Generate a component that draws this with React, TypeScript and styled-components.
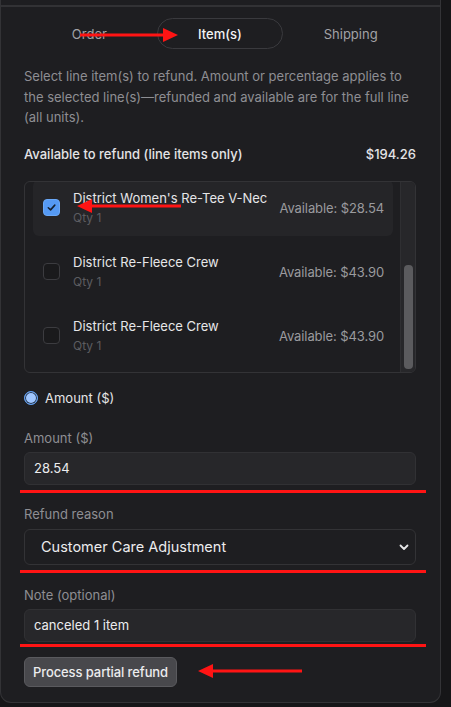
import React from "react";
import styled, { createGlobalStyle } from "styled-components";

const GlobalStyle = createGlobalStyle`
  html, body { margin: 0; padding: 0; background: #161618; }
  body { font-family: Inter, "Noto Sans", sans-serif; -webkit-font-smoothing: antialiased; }
  * { box-sizing: border-box; }
`;

const Page = styled.div`
  position: relative;
  width: 451px;
  height: 707px;
  overflow: hidden;
`;

const Panel = styled.div`
  width: 441px;
  background: #1e1e21;
  border: 1px solid #333336;
  border-top: none;
  border-radius: 0 0 11px 11px;
  padding: 0 24px 15px 23px;
`;

const TopRule = styled.div`
  height: 7px;
  margin: 0 -24px 0 -23px;
  border-bottom: 2px solid #323235;
`;

const Tabs = styled.div`
  display: grid;
  grid-template-columns: repeat(3, 1fr);
  margin-top: 11px;
  height: 31px;
  align-items: stretch;
`;

const Tab = styled.div<{ $active?: boolean }>`
  display: flex;
  align-items: center;
  justify-content: center;
  margin: 0 2px;
  font-size: 13px;
  font-weight: ${(p) => (p.$active ? 500 : 400)};
  color: ${(p) => (p.$active ? "#f2f2f4" : "#a2a2a6")};
  border: 1px solid ${(p) => (p.$active ? "#3a3a3e" : "transparent")};
  border-radius: 999px;
`;

const Description = styled.p`
  margin: 17px 0 0;
  font-size: 13px;
  line-height: 20.5px;
  color: #8e8e93;
`;

const SummaryRow = styled.div`
  margin-top: 16px;
  display: flex;
  justify-content: space-between;
  font-size: 13px;
  line-height: 20px;
  font-weight: 500;
  color: #e4e4e6;
`;

const ListBox = styled.div`
  margin-top: 17px;
  height: 192px;
  border: 1px solid #333336;
  border-radius: 6px;
  display: flex;
  overflow: hidden;
`;

const ListViewport = styled.div`
  flex: 1;
  display: flex;
  flex-direction: column;
  justify-content: flex-end;
  gap: 8px;
  padding: 0 7px 8px 8px;
  overflow: hidden;
  min-width: 0;
`;

const Row = styled.div<{ $selected?: boolean }>`
  flex: 0 0 56px;
  display: flex;
  align-items: center;
  padding: 0 9px 0 10px;
  border-radius: 6px;
  background: ${(p) => (p.$selected ? "#252528" : "transparent")};
`;

const Check = styled.div<{ $checked?: boolean }>`
  width: 17px;
  height: 17px;
  flex: 0 0 17px;
  border-radius: 4px;
  display: flex;
  align-items: center;
  justify-content: center;
  background: ${(p) => (p.$checked ? "#559af4" : "#1a1a1c")};
  border: 1px solid ${(p) => (p.$checked ? "#6aa8f7" : "#3c3c40")};
`;

const ItemText = styled.div`
  margin-left: 13px;
  width: 194px;
  overflow: hidden;
  display: flex;
  flex-direction: column;
  gap: 2px;
`;

const ItemName = styled.div`
  font-size: 13px;
  line-height: 18px;
  color: #e6e6e8;
  white-space: nowrap;
  overflow: hidden;
`;

const ItemQty = styled.div`
  font-size: 12px;
  line-height: 18px;
  color: #5c5c60;
`;

const ItemAvail = styled.div`
  margin-left: auto;
  font-size: 13px;
  letter-spacing: -0.1px;
  color: #9a9a9e;
  white-space: nowrap;
`;

const ScrollTrack = styled.div`
  flex: 0 0 15px;
  background: #27272a;
  border-left: 1px solid #2f2f32;
  display: flex;
  flex-direction: column;
  justify-content: flex-end;
  padding: 0 2px 3px 3px;
`;

const ScrollThumb = styled.div`
  height: 104px;
  border-radius: 4px;
  background: #5b5b5e;
`;

const RadioRow = styled.label`
  margin-top: 15px;
  display: flex;
  align-items: center;
  gap: 7px;
  font-size: 13px;
  line-height: 20px;
  color: #e4e4e6;
`;

const RadioDot = styled.span`
  width: 14px;
  height: 14px;
  border-radius: 50%;
  background: #9fc6ff;
  border: 1.5px solid #5e9ff5;
  box-shadow: inset 0 0 0 1px #24344a;
`;

const Field = styled.div<{ $top: number }>`
  margin-top: ${(p) => p.$top}px;
  display: flex;
  flex-direction: column;
  gap: 4px;
`;

const Label = styled.label`
  font-size: 13px;
  line-height: 20px;
  color: #8e8e93;
`;

const TextInput = styled.input`
  height: 33px;
  width: 100%;
  background: #27272a;
  border: 1px solid #313134;
  border-radius: 6px;
  padding: 0 9px;
  font-family: Inter, "Noto Sans", sans-serif;
  font-size: 13px;
  color: #ececee;
  outline: none;
`;

const SelectWrap = styled.div`
  position: relative;
  margin-top: 1px;
`;

const Select = styled.select`
  height: 36px;
  width: 100%;
  appearance: none;
  -webkit-appearance: none;
  background: #1e1e21;
  border: 1px solid #333336;
  border-radius: 6px;
  padding: 0 16px;
  font-family: Inter, "Noto Sans", sans-serif;
  font-size: 14.5px;
  color: #ececee;
  outline: none;
`;

const Chevron = styled.svg`
  position: absolute;
  right: 6px;
  top: 50%;
  transform: translateY(-50%);
  pointer-events: none;
`;

const Button = styled.button`
  margin-top: 15px;
  height: 30px;
  padding: 0 8px;
  background: #48484c;
  border: 1px solid #5a5a5e;
  border-radius: 6px;
  font-family: Inter, "Noto Sans", sans-serif;
  font-size: 13px;
  font-weight: 500;
  letter-spacing: -0.1px;
  color: #ececee;
`;

const Annotations = styled.svg`
  position: absolute;
  left: 0;
  top: 0;
  pointer-events: none;
`;

const items = [
  { name: "District Women's Re-Tee V-Neck", qty: 1, avail: "$28.54", checked: true },
  { name: "District Re-Fleece Crew", qty: 1, avail: "$43.90", checked: false },
  { name: "District Re-Fleece Crew", qty: 1, avail: "$43.90", checked: false },
];

const RED = "#ff1414";

export default function App() {
  return (
    <Page>
      <GlobalStyle />
      <Panel>
        <TopRule />
        <Tabs>
          <Tab>Order</Tab>
          <Tab $active>Item(s)</Tab>
          <Tab>Shipping</Tab>
        </Tabs>
        <Description>
          Select line item(s) to refund. Amount or percentage applies to the selected
          line(s)—refunded and available are for the full line (all units).
        </Description>
        <SummaryRow>
          <span>Available to refund (line items only)</span>
          <span>$194.26</span>
        </SummaryRow>
        <ListBox>
          <ListViewport>
            {items.map((it, i) => (
              <Row key={i} $selected={it.checked}>
                <Check $checked={it.checked}>
                  {it.checked && (
                    <svg width="11" height="11" viewBox="0 0 12 12">
                      <path d="M2.5 6.3 L5 8.6 L9.6 3.4" fill="none" stroke="#15202e" strokeWidth="1.7" strokeLinecap="round" strokeLinejoin="round" />
                    </svg>
                  )}
                </Check>
                <ItemText>
                  <ItemName>{it.name}</ItemName>
                  <ItemQty>Qty {it.qty}</ItemQty>
                </ItemText>
                <ItemAvail>Available: {it.avail}</ItemAvail>
              </Row>
            ))}
          </ListViewport>
          <ScrollTrack>
            <ScrollThumb />
          </ScrollTrack>
        </ListBox>
        <RadioRow>
          <RadioDot />
          Amount ($)
        </RadioRow>
        <Field $top={20}>
          <Label>Amount ($)</Label>
          <TextInput value="28.54" readOnly />
        </Field>
        <Field $top={19}>
          <Label>Refund reason</Label>
          <SelectWrap>
            <Select value="cca" onChange={() => {}}>
              <option value="cca">Customer Care Adjustment</option>
            </Select>
            <Chevron width="12" height="12" viewBox="0 0 12 12">
              <path d="M2.5 4.5 L6 8 L9.5 4.5" fill="none" stroke="#e6e6e8" strokeWidth="1.8" strokeLinecap="round" strokeLinejoin="round" />
            </Chevron>
          </SelectWrap>
        </Field>
        <Field $top={20}>
          <Label>Note (optional)</Label>
          <TextInput value="canceled 1 item" readOnly />
        </Field>
        <Button>Process partial refund</Button>
      </Panel>
      <Annotations width="451" height="707" viewBox="0 0 451 707">
        <rect x="80" y="33.5" width="86" height="3" fill={RED} />
        <polygon points="163,28 178,35 163,42" fill={RED} />
        <rect x="90" y="204.5" width="91" height="3" fill={RED} />
        <polygon points="92,199 77,206 92,213" fill={RED} />
        <rect x="20" y="490" width="406" height="3" fill={RED} />
        <rect x="20" y="570" width="406" height="3" fill={RED} />
        <rect x="20" y="644" width="406" height="3" fill={RED} />
        <rect x="211" y="669.5" width="91" height="3" fill={RED} />
        <polygon points="213,664 198,671 213,678" fill={RED} />
      </Annotations>
    </Page>
  );
}
